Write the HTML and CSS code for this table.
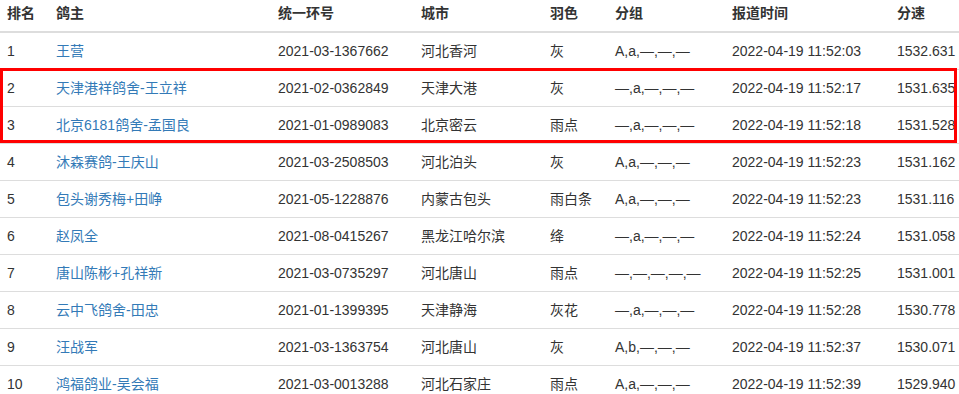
FILE: index.html
```html
<!DOCTYPE html>
<html lang="zh-CN">
<head>
<meta charset="utf-8">
<title>排名</title>
<link rel="stylesheet" href="styles.css">
</head>
<body>
<div class="wrap">
<table class="rank">
<colgroup>
<col class="c1"><col class="c2"><col class="c3"><col class="c4"><col class="c5"><col class="c6"><col class="c7"><col class="c8">
</colgroup>
<thead>
<tr><th>排名</th><th>鸽主</th><th>统一环号</th><th>城市</th><th>羽色</th><th>分组</th><th>报道时间</th><th>分速</th></tr>
</thead>
<tbody>
<tr><td>1</td><td><a href="#">王营</a></td><td>2021-03-1367662</td><td>河北香河</td><td>灰</td><td>A,a,—,—,—</td><td>2022-04-19 11:52:03</td><td>1532.631</td></tr>
<tr><td>2</td><td><a href="#">天津港祥鸽舍-王立祥</a></td><td>2021-02-0362849</td><td>天津大港</td><td>灰</td><td>—,a,—,—,—</td><td>2022-04-19 11:52:17</td><td>1531.635</td></tr>
<tr><td>3</td><td><a href="#">北京6181鸽舍-孟国良</a></td><td>2021-01-0989083</td><td>北京密云</td><td>雨点</td><td>—,a,—,—,—</td><td>2022-04-19 11:52:18</td><td>1531.528</td></tr>
<tr><td>4</td><td><a href="#">沐森赛鸽-王庆山</a></td><td>2021-03-2508503</td><td>河北泊头</td><td>灰</td><td>A,a,—,—,—</td><td>2022-04-19 11:52:23</td><td>1531.162</td></tr>
<tr><td>5</td><td><a href="#">包头谢秀梅+田峥</a></td><td>2021-05-1228876</td><td>内蒙古包头</td><td>雨白条</td><td>A,a,—,—,—</td><td>2022-04-19 11:52:23</td><td>1531.116</td></tr>
<tr><td>6</td><td><a href="#">赵凤全</a></td><td>2021-08-0415267</td><td>黑龙江哈尔滨</td><td>绛</td><td>—,a,—,—,—</td><td>2022-04-19 11:52:24</td><td>1531.058</td></tr>
<tr><td>7</td><td><a href="#">唐山陈彬+孔祥新</a></td><td>2021-03-0735297</td><td>河北唐山</td><td>雨点</td><td>—,—,—,—,—</td><td>2022-04-19 11:52:25</td><td>1531.001</td></tr>
<tr><td>8</td><td><a href="#">云中飞鸽舍-田忠</a></td><td>2021-01-1399395</td><td>天津静海</td><td>灰花</td><td>—,a,—,—,—</td><td>2022-04-19 11:52:28</td><td>1530.778</td></tr>
<tr><td>9</td><td><a href="#">汪战军</a></td><td>2021-03-1363754</td><td>河北唐山</td><td>灰</td><td>A,b,—,—,—</td><td>2022-04-19 11:52:37</td><td>1530.071</td></tr>
<tr><td>10</td><td><a href="#">鸿福鸽业-吴会福</a></td><td>2021-03-0013288</td><td>河北石家庄</td><td>雨点</td><td>A,a,—,—,—</td><td>2022-04-19 11:52:39</td><td>1529.940</td></tr>
</tbody>
</table>
<div class="highlight"></div>
</div>
</body>
</html>
```

FILE: styles.css
```css
html, body {
  margin: 0;
  padding: 0;
  background: #fff;
}
body {
  font-family: "Liberation Sans", Arial, "Noto Sans CJK SC", sans-serif;
  font-size: 14px;
  line-height: 20px;
  color: #333;
}
.wrap {
  position: relative;
  width: 959px;
}
.rank {
  width: 959px;
  border-collapse: collapse;
  border-spacing: 0;
  table-layout: fixed;
}
.c1 { width: 49px; }
.c2 { width: 222px; }
.c3 { width: 143px; }
.c4 { width: 129px; }
.c5 { width: 65px; }
.c6 { width: 117px; }
.c7 { width: 165px; }
.c8 { width: 69px; }
.rank th {
  text-align: left;
  font-weight: bold;
  padding: 3px 0 8px 7px;
  border-bottom: 2px solid #ddd;
  white-space: nowrap;
  vertical-align: bottom;
}
.rank td {
  padding: 8px 0 8px 7px;
  border-top: 1px solid #ddd;
  white-space: nowrap;
  overflow: hidden;
}
.rank a {
  color: #337ab7;
  text-decoration: none;
}
.highlight {
  position: absolute;
  left: 0;
  top: 68px;
  width: 957px;
  height: 75px;
  box-sizing: border-box;
  border: 3px solid #ff0000;
  pointer-events: none;
}
```
